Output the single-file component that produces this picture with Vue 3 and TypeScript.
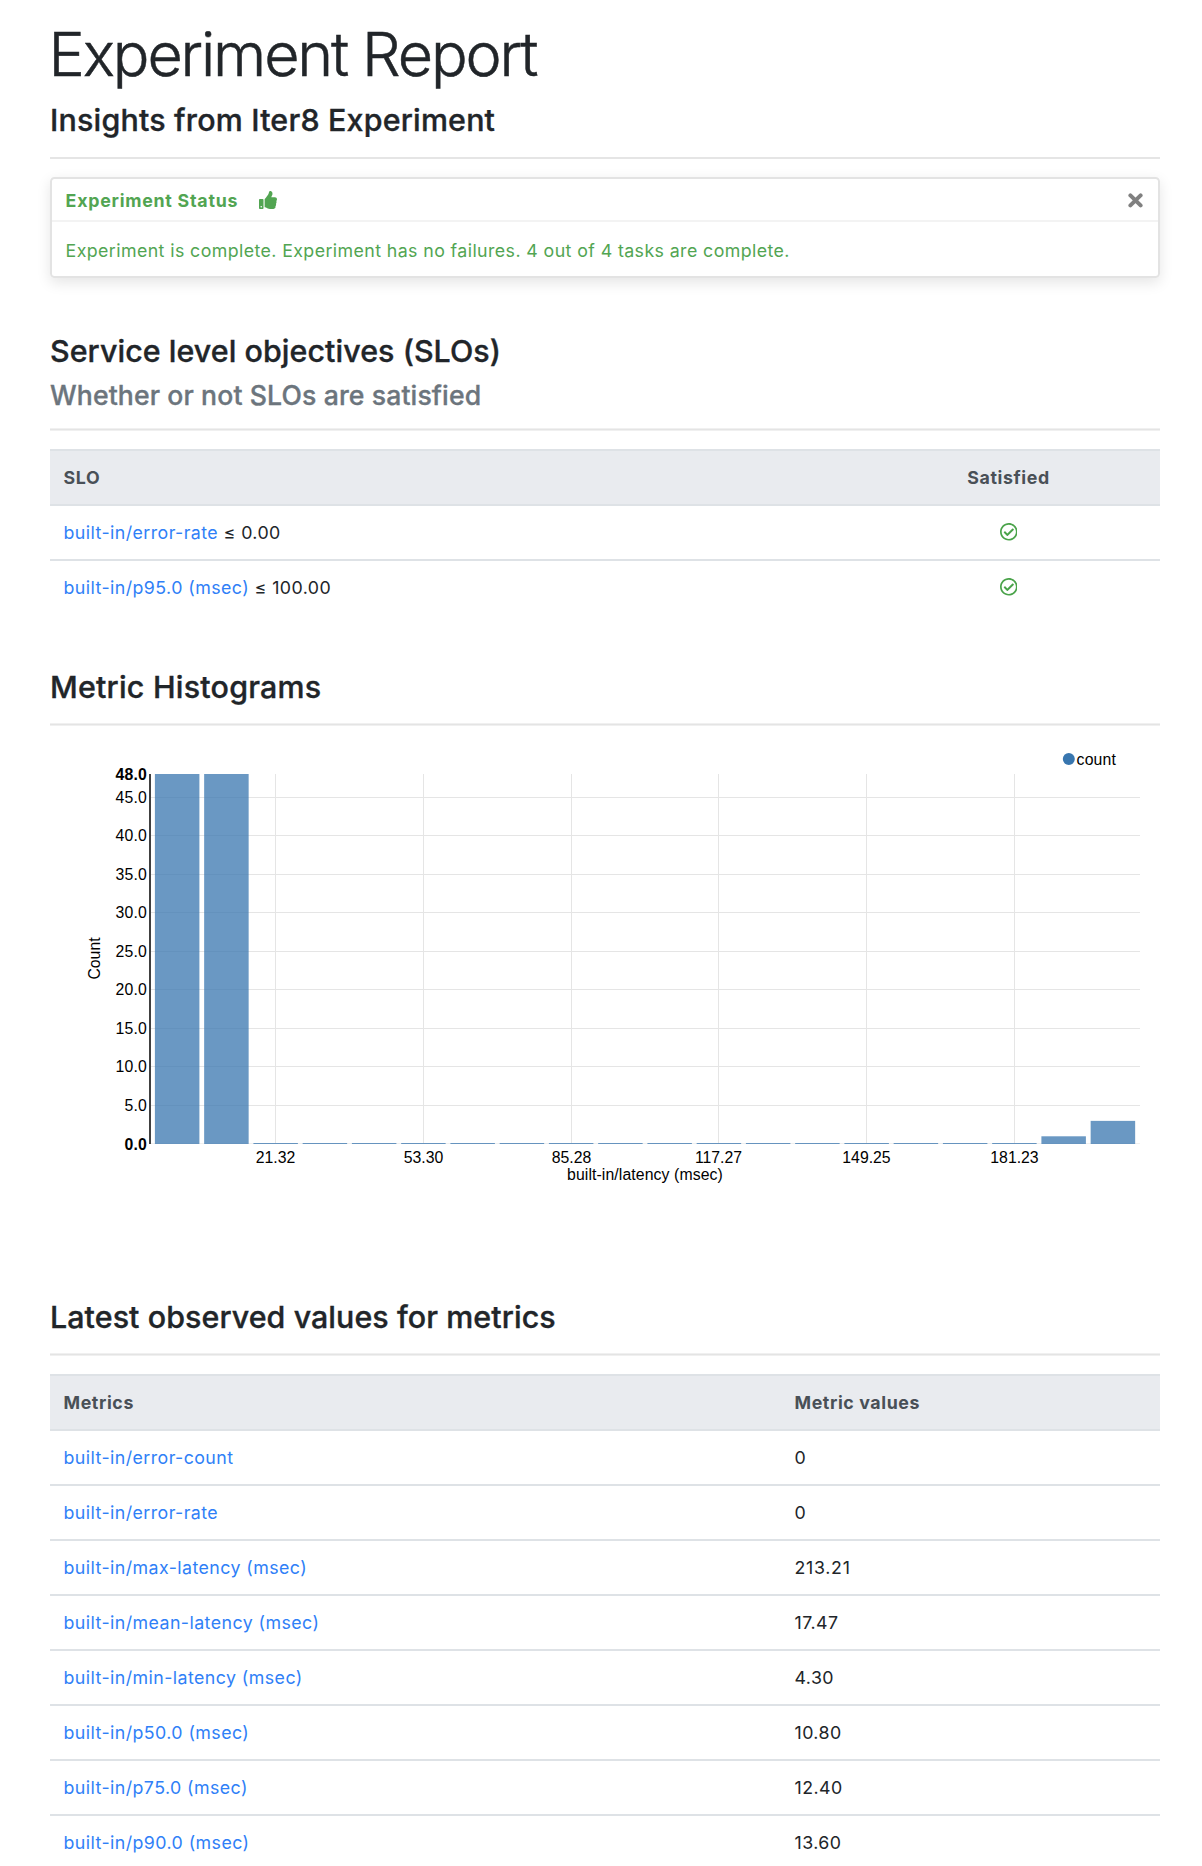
<script setup lang="ts">
interface Objective {
  metric: string
  limit: string
}

interface Metric {
  name: string
  value: string
  wide?: boolean
}

const objectives: Objective[] = [
  { metric: 'built-in/error-rate', limit: '≤ 0.00' },
  { metric: 'built-in/p95.0 (msec)', limit: '≤ 100.00' },
]

const metrics: Metric[] = [
  { name: 'built-in/error-count', value: '0' },
  { name: 'built-in/error-rate', value: '0' },
  { name: 'built-in/max-latency (msec)', value: '213.21', wide: true },
  { name: 'built-in/mean-latency (msec)', value: '17.47' },
  { name: 'built-in/min-latency (msec)', value: '4.30' },
  { name: 'built-in/p50.0 (msec)', value: '10.80' },
  { name: 'built-in/p75.0 (msec)', value: '12.40' },
  { name: 'built-in/p90.0 (msec)', value: '13.60' },
]

// Plot area inside the chart's own coordinate system
const plot = { left: 100, top: 48, right: 1090, bottom: 418 }
const maxCount = 48
const y = (count: number) => plot.bottom - (count / maxCount) * (plot.bottom - plot.top)

const counts = [48, 48, 0, 0, 0, 0, 0, 0, 0, 0, 0, 0, 0, 0, 0, 0, 0, 0, 1, 3]
const bars = counts.map((count, i) => {
  const height = Math.max(1, plot.bottom - y(count))
  return { x: 104.9 + i * 49.25, y: plot.bottom - height, height }
})

const yTicks = [5, 10, 15, 20, 25, 30, 35, 40, 45].map((v) => ({
  label: v.toFixed(1),
  y: Math.floor(y(v)) + 0.5,
}))

const xTicks = [
  { label: '21.32', x: 225.5 },
  { label: '53.30', x: 373.5 },
  { label: '85.28', x: 521.5 },
  { label: '117.27', x: 668.5 },
  { label: '149.25', x: 816.5 },
  { label: '181.23', x: 964.5 },
]
</script>

<template>
  <main class="report">
    <h1>Experiment Report</h1>
    <h3 class="lead">Insights from Iter8 Experiment</h3>
    <div class="rule"></div>

    <section class="toast">
      <header class="toast-header">
        <strong>Experiment Status</strong>
        <svg class="thumb" viewBox="0 0 512 512" aria-hidden="true">
          <path
            d="M104 224H24c-13.255 0-24 10.745-24 24v240c0 13.255 10.745 24 24 24h80c13.255 0 24-10.745 24-24V248c0-13.255-10.745-24-24-24zM64 472c-13.255 0-24-10.745-24-24s10.745-24 24-24 24 10.745 24 24-10.745 24-24 24zM384 81.452c0 42.416-25.97 66.208-33.277 94.548h101.723c33.397 0 59.397 27.746 59.553 58.098.084 17.938-7.546 37.249-19.439 49.197l-.11.11c9.836 23.337 8.237 56.037-9.308 79.469 8.681 25.895-.069 57.704-16.382 74.757 4.298 17.598 2.244 32.575-6.148 44.632C440.202 511.587 389.616 512 346.839 512l-2.845-.001c-48.287-.017-87.806-17.598-119.56-31.725-15.957-7.099-36.821-15.887-52.651-16.178-6.54-.12-11.783-5.457-11.783-11.998v-213.77c0-3.2 1.282-6.271 3.558-8.521 39.614-39.144 56.648-80.587 89.117-113.111 14.804-14.832 20.188-37.236 25.393-58.902C282.515 39.293 291.817 0 312 0c24 0 72 8 72 81.452z"
          />
        </svg>
        <button class="close" type="button" aria-label="Close">
          <svg viewBox="0 0 15 15" aria-hidden="true">
            <path d="M2.4 2.4L12.6 12.4M12.6 2.4L2.4 12.4" />
          </svg>
        </button>
      </header>
      <p class="toast-body">
        Experiment is complete. Experiment has no failures. 4 out of 4 tasks are complete.
      </p>
    </section>

    <section class="objectives">
      <h3 class="slo-title">Service level objectives (SLOs)</h3>
      <h4>Whether or not SLOs are satisfied</h4>
      <div class="rule soft"></div>
      <div class="table slo-table">
        <div class="row head">
          <span>SLO</span>
          <span class="center">Satisfied</span>
        </div>
        <div v-for="o in objectives" :key="o.metric" class="row">
          <span><a>{{ o.metric }}</a> {{ o.limit }}</span>
          <span class="center">
            <svg class="check" viewBox="8 8 496 496" aria-hidden="true">
              <path
                d="M256 8C119.033 8 8 119.033 8 256s111.033 248 248 248 248-111.033 248-248S392.967 8 256 8zm0 48c110.532 0 200 89.451 200 200 0 110.532-89.451 200-200 200-110.532 0-200-89.451-200-200 0-110.532 89.451-200 200-200m140.204 130.267l-22.536-22.718c-4.667-4.705-12.265-4.736-16.97-.068L215.346 303.697l-59.792-60.277c-4.667-4.705-12.265-4.736-16.97-.069l-22.719 22.536c-4.705 4.667-4.736 12.265-.068 16.971l90.781 91.516c4.667 4.705 12.265 4.736 16.97.068l172.589-171.204c4.704-4.668 4.734-12.266.067-16.971z"
              />
            </svg>
          </span>
        </div>
      </div>
    </section>

    <section class="histograms">
      <h3 class="histogram-title">Metric Histograms</h3>
      <div class="rule soft"></div>
      <svg class="chart" width="1110" height="572" viewBox="0 0 1110 572">
        <g class="grid">
          <line v-for="t in yTicks" :key="t.label" :x1="plot.left" :x2="plot.right" :y1="t.y" :y2="t.y" />
          <line v-for="t in xTicks" :key="t.label" :x1="t.x" :x2="t.x" :y1="plot.top" :y2="plot.bottom" />
          <line class="base" :x1="plot.left" :x2="plot.right" y1="417.5" y2="417.5" />
        </g>
        <line class="axis" :x1="plot.left" :x2="plot.left" :y1="plot.top" :y2="plot.bottom" />
        <g class="bars">
          <rect v-for="(b, i) in bars" :key="i" :x="b.x" :y="b.y" width="44.5" :height="b.height" />
        </g>
        <g class="y-labels">
          <text class="bold" x="97" y="53.7">48.0</text>
          <text v-for="t in yTicks" :key="t.label" x="97" :y="t.y + 5.3">{{ t.label }}</text>
          <text class="bold" x="97" y="423.5">0.0</text>
        </g>
        <g class="x-labels">
          <text v-for="t in xTicks" :key="t.label" :x="t.x" y="437.2">{{ t.label }}</text>
          <text class="x-title" x="595" y="454">built-in/latency (msec)</text>
          <text transform="translate(50.2 232.5) rotate(-90)">Count</text>
        </g>
        <circle cx="1018.8" cy="33" r="6" />
        <text class="legend" x="1026.6" y="38.7">count</text>
      </svg>
    </section>

    <section>
      <h3 class="latest-title">Latest observed values for metrics</h3>
      <div class="rule soft"></div>
      <div class="table metric-table">
        <div class="row head">
          <span>Metrics</span>
          <span>Metric values</span>
        </div>
        <div v-for="m in metrics" :key="m.name" class="row">
          <span><a>{{ m.name }}</a></span>
          <span :class="{ wide: m.wide }">{{ m.value }}</span>
        </div>
      </div>
    </section>
  </main>
</template>

<style>
body {
  background: #fff;
}
</style>

<style scoped>
.report {
  box-sizing: border-box;
  height: 1866px;
  overflow: hidden;
  padding: 16px 42px 0 50px;
  font-family: Inter, 'Liberation Sans', sans-serif;
  font-size: 17.8px;
  letter-spacing: 0.43px;
  color: #212529;
}

h1,
h3,
h4,
p {
  margin: 0;
}

h1 {
  margin-left: -1.5px;
  font-size: 61px;
  font-weight: 300;
  line-height: 76px;
  letter-spacing: -2.16px;
  -webkit-text-stroke: 0.5px currentColor;
}

h3 {
  font-size: 30.4px;
  font-weight: 500;
  line-height: 38px;
  -webkit-text-stroke: 0.35px currentColor;
}

h4 {
  margin-top: 9px;
  font-size: 26.6px;
  font-weight: 500;
  line-height: 32px;
  letter-spacing: 0.12px;
  color: #6c757d;
  -webkit-text-stroke: 0.35px currentColor;
}

.lead {
  margin-top: 9px;
  letter-spacing: 0.2px;
}

.slo-title {
  letter-spacing: 0.06px;
}

.histogram-title {
  letter-spacing: 0.23px;
}

.latest-title {
  letter-spacing: 0.08px;
}

.rule {
  height: 2px;
  margin: 18px 0;
  background: #e5e5e5;
}

.rule.soft {
  height: 3px;
  margin-top: 17px;
  background: linear-gradient(#f0f0f0 1px, #e4e4e4 1px 2px, #f0f0f0 2px);
}

.toast {
  box-sizing: border-box;
  height: 101px;
  border: 2px solid #e3e3e3;
  border-radius: 4.5px;
  box-shadow: 0 4.5px 13.5px rgba(0, 0, 0, 0.1);
  color: #52a552;
}

.toast-header {
  box-sizing: border-box;
  display: flex;
  align-items: center;
  height: 43px;
  padding: 0 15px 0 13.6px;
  border-bottom: 2px solid #f3f3f3;
}

.toast-header strong {
  padding-top: 2px;
  font-weight: 700;
  letter-spacing: 0.75px;
}

.thumb {
  width: 18px;
  height: 18px;
  margin: 1px 0 0 20.5px;
  fill: currentColor;
}

.close {
  display: flex;
  margin: 1px 0 0 auto;
  padding: 0;
  border: 0;
  background: none;
}

.close svg {
  width: 15px;
  height: 15px;
  fill: none;
  stroke: #808080;
  stroke-width: 4;
  stroke-linecap: round;
}

.toast-body {
  box-sizing: border-box;
  height: 54px;
  padding: 2px 13.6px 0;
  line-height: 54px;
  letter-spacing: 0.4px;
}

.objectives {
  margin-top: 54px;
}

.histograms {
  margin-top: 54px;
}

.row {
  box-sizing: border-box;
  display: grid;
  height: 55px;
  border-top: 2px solid #dee2e6;
  line-height: 53px;
}

.row > span {
  padding-left: 13.5px;
}

.slo-table .row {
  grid-template-columns: 1fr 303px;
}

.metric-table .row {
  grid-template-columns: 731px 1fr;
}

.head {
  background: #e9ebef;
  font-weight: 700;
  letter-spacing: 0.6px;
  color: #495057;
}

.row > .center {
  display: flex;
  align-items: center;
  justify-content: center;
  padding: 0;
}

.row > .wide {
  letter-spacing: 0.7px;
}

a {
  color: #2f80f7;
}

.check {
  width: 17.6px;
  height: 17.6px;
  margin-bottom: 0.5px;
  fill: #4aa34a;
}

.chart {
  display: block;
  margin-top: -18px;
  font-family: 'Liberation Sans', Arial, sans-serif;
  font-size: 15.8px;
  letter-spacing: 0;
  fill: #000;
}

.grid line {
  stroke: #e5e5e5;
}

.grid .base {
  stroke: #f0f0f0;
}

.axis {
  stroke: #404040;
  stroke-width: 2;
}

.bars rect {
  fill: #3876af;
  fill-opacity: 0.75;
}

.y-labels {
  text-anchor: end;
  letter-spacing: 0.2px;
}

.x-labels {
  text-anchor: middle;
}

.x-title {
  letter-spacing: 0.1px;
}

.legend {
  letter-spacing: 0.15px;
}

.bold {
  font-weight: 700;
}

.chart circle {
  fill: #3876af;
}
</style>
